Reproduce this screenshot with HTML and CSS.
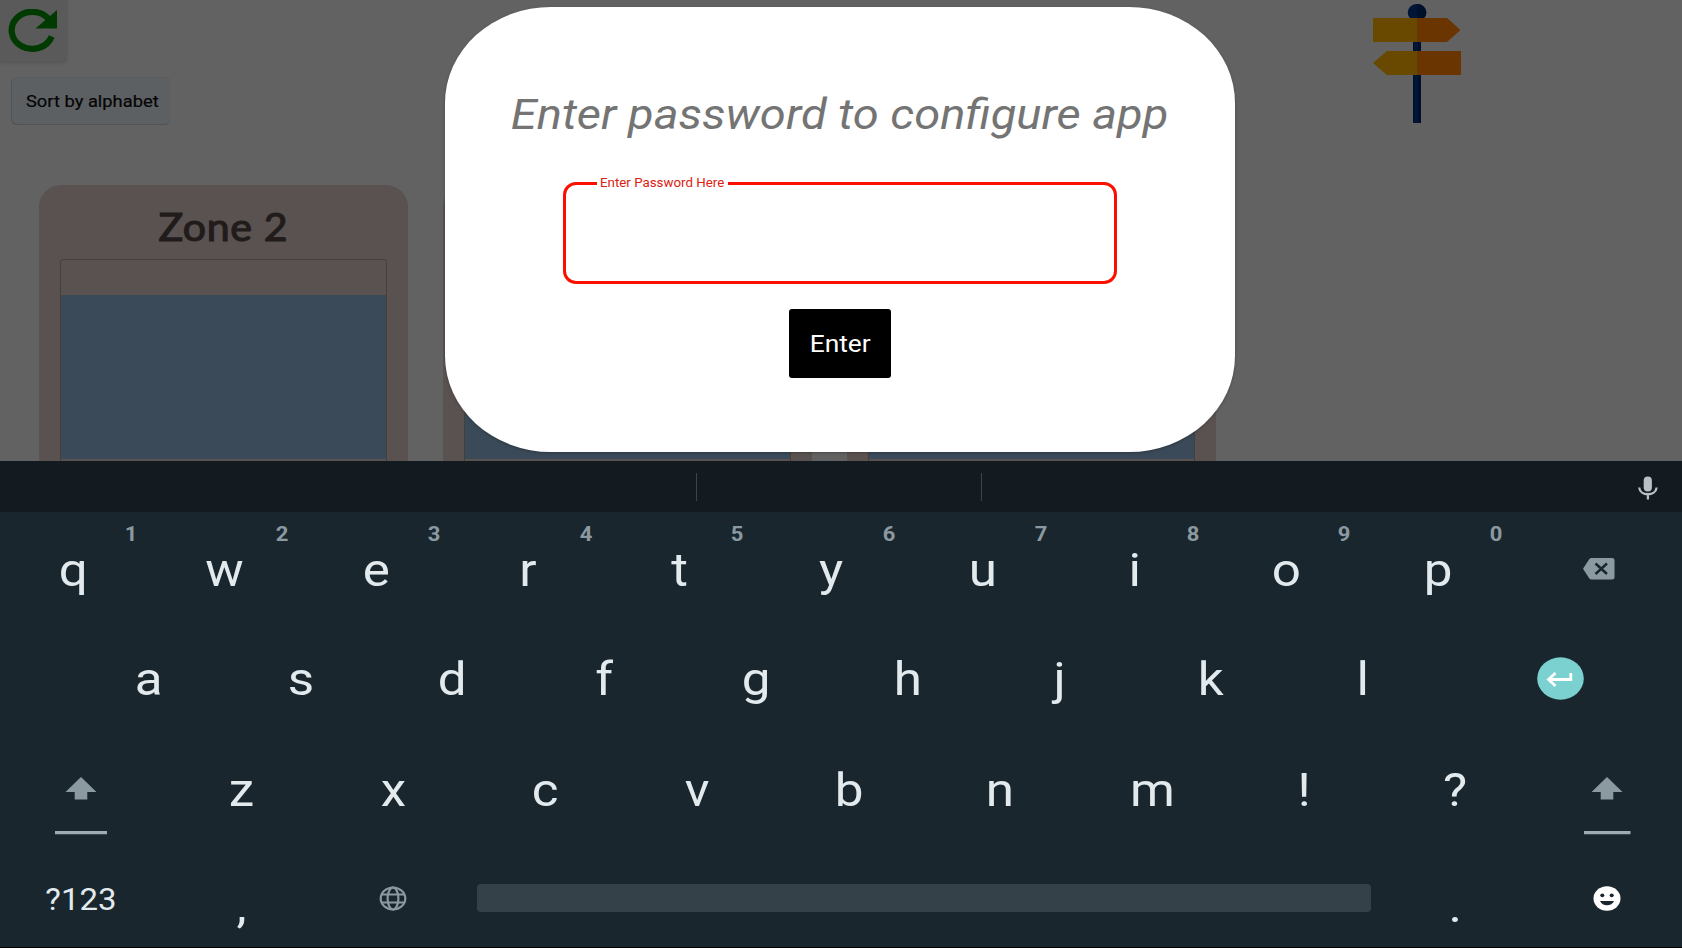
FILE: index.html
```html
<!DOCTYPE html>
<html lang="en">
<head>
<meta charset="utf-8">
<title>Configure app</title>
<link rel="stylesheet" href="styles.css">
</head>
<body>
<div class="screen">
  <main class="app">
    <div class="toolbar">
      <div class="tools">
        <div class="refresh">
          <svg width="50" height="44" viewBox="0 0 50 44"><path d="M43.700 27.500A20.600 18.500 0 1 1 41 10.500" fill="none" stroke="#003a00" stroke-width="6.200"/><path d="M49 1v18.500H27.500z" fill="#003a00"/></svg>
        </div>
        <div class="sort"><span class="sort-text">Sort by alphabet</span></div>
      </div>
      <svg class="signpost" width="90" height="120" viewBox="0 0 90 120">
        <ellipse cx="45" cy="8.500" rx="9.300" ry="8.500" fill="#001638"/><path d="M45 0a9.300 8.500 0 0 1 0 17z" fill="#00102b"/>
        <path d="M41 14h8v105h-8z" fill="#00102b"/><path d="M42.500 14h3.500v105h-3.500z" fill="#001638"/>
        <path d="M1 14h44v24H1z" fill="#694800"/><path d="M45 14h30l13.500 12L75 38H45z" fill="#6a3500"/>
        <path d="M45 47v24H15L1 59l14-12z" fill="#694800"/><path d="M45 47h44v24H45z" fill="#6a3500"/>
      </svg>
    </div>
    <div class="zones">
      <section class="zone"><h2 class="zone-title"><span class="zone-title-text">Zone 2</span></h2><div class="tank"><div class="water"></div></div></section>
      <section class="zone"><h2 class="zone-title"></h2><div class="tank"><div class="water"></div></div></section>
      <section class="zone"><h2 class="zone-title"></h2><div class="tank"><div class="water"></div></div></section>
    </div>
  </main>

  <div class="dialog">
    <h1 class="dialog-title"><span class="dialog-title-text">Enter password to configure app</span></h1>
    <fieldset class="field"><legend class="legend"><span class="legend-text">Enter Password Here</span></legend></fieldset>
    <div class="submit"><span class="submit-text">Enter</span></div>
  </div>

  <div class="keyboard">
    <div class="suggest">
      <div class="suggest-mid"></div>
      <svg class="mic" width="20" height="24" viewBox="0 0 20 24"><rect x="5.700" y=".5" width="8.200" height="15" rx="4.100" fill="#b9c1c5"/><path d="M1.200 11.500c.8 9 16.600 9 17.400 0M9.900 18v5.500" fill="none" stroke="#b9c1c5" stroke-width="2.300"/></svg>
    </div>
    <div class="row row-1">
      <div class="key"><span class="hint">1</span><span class="ch">q</span></div>
      <div class="key"><span class="hint">2</span><span class="ch">w</span></div>
      <div class="key"><span class="hint">3</span><span class="ch">e</span></div>
      <div class="key"><span class="hint">4</span><span class="ch">r</span></div>
      <div class="key"><span class="hint">5</span><span class="ch">t</span></div>
      <div class="key"><span class="hint">6</span><span class="ch">y</span></div>
      <div class="key"><span class="hint">7</span><span class="ch">u</span></div>
      <div class="key"><span class="hint">8</span><span class="ch">i</span></div>
      <div class="key"><span class="hint">9</span><span class="ch">o</span></div>
      <div class="key"><span class="hint">0</span><span class="ch">p</span></div>
      <div class="side backspace"><svg width="32" height="22" viewBox="0 0 32 22"><path d="M8.500 0H29q2.500 0 2.500 2.200v17.200q0 2.100-2.500 2.100H8.500q-1.500 0-2.300-1.300L0 10.800 6.200 1.300Q7 0 8.500 0z" fill="#8b99a0"/><path d="M12.500 5.500l11.500 10.500M24 5.500L12.500 16" stroke="#1a262e" stroke-width="2.500"/></svg></div>
    </div>
    <div class="row row-2">
      <div class="key"><span class="ch">a</span></div><div class="key"><span class="ch">s</span></div><div class="key"><span class="ch">d</span></div>
      <div class="key"><span class="ch">f</span></div><div class="key"><span class="ch">g</span></div><div class="key"><span class="ch">h</span></div>
      <div class="key"><span class="ch">j</span></div><div class="key"><span class="ch">k</span></div><div class="key"><span class="ch">l</span></div>
      <div class="side return"><svg width="47" height="43" viewBox="0 0 47 43"><ellipse cx="23.500" cy="21.500" rx="23.300" ry="21.200" fill="#7bd0d0"/><path d="M33.800 16v6.500H11.500M18.500 16l-7 6.500 7 6.500" fill="none" stroke="#fff" stroke-width="2.800"/></svg></div>
    </div>
    <div class="row row-3">
      <div class="side first shift"><svg width="52" height="58" viewBox="0 0 52 58"><path d="M26 0l15.500 15h-9.200v7.500H19.700V15h-9.200z" fill="#8b99a0"/><path d="M0 54h52v3.200H0z" fill="#9eabb1"/></svg></div>
      <div class="key"><span class="ch">z</span></div><div class="key"><span class="ch">x</span></div><div class="key"><span class="ch">c</span></div>
      <div class="key"><span class="ch">v</span></div><div class="key"><span class="ch">b</span></div><div class="key"><span class="ch">n</span></div>
      <div class="key"><span class="ch">m</span></div><div class="key"><span class="ch">!</span></div><div class="key"><span class="ch">?</span></div>
      <div class="side shift"><svg width="48" height="58" viewBox="0 0 48 58"><path d="M24 0l15.500 15h-9.200v7.500H17.700V15H8.500z" fill="#8b99a0"/><path d="M1 54h46.500v3.200H1z" fill="#9eabb1"/></svg></div>
    </div>
    <div class="row row-4">
      <div class="side first"><span class="mode">?123</span></div>
      <div class="key low"><span class="ch">,</span></div>
      <div class="key globe"><svg width="28" height="25" viewBox="0 0 28 25" fill="none" stroke="#8b99a0" stroke-width="2.200"><ellipse cx="14" cy="12.500" rx="12.300" ry="11"/><ellipse cx="14" cy="12.500" rx="5.400" ry="11"/><path d="M2.700 8.500h22.600M2.700 16.500h22.600"/></svg></div>
      <div class="space-cell"><div class="space"></div></div>
      <div class="key low"><span class="ch">.</span></div>
      <div class="side"><svg class="smiley" width="28" height="25" viewBox="0 0 28 25"><ellipse cx="14" cy="12.500" rx="13.500" ry="12.200" fill="#fff"/><ellipse cx="9.300" cy="9.300" rx="2" ry="1.900" fill="#1a262e"/><ellipse cx="18.700" cy="9.300" rx="2" ry="1.900" fill="#1a262e"/><path d="M7 15h14c-2 5.600-12 5.600-14 0z" fill="#1a262e"/></svg></div>
    </div>
  </div>
</div>
</body>
</html>
```
FILE: styles.css
```css
* { box-sizing: border-box; }
body { margin: 0; background: #000; font-family: Roboto, "Liberation Sans", sans-serif; }
.screen { position: relative; width: 1682px; height: 948px; overflow: hidden; }

.app { height: 461px; overflow: hidden; background: #626262; }
.toolbar { display: flex; justify-content: space-between; height: 185px; padding-right: 220px; }
.refresh { width: 67px; height: 62px; padding: 9px 0 0 8px; background: #5a5a5a; border-radius: 0 0 5px 0; box-shadow: 0 1px 3px rgba(0,0,0,.15); }
.refresh svg { display: block; }
.sort { width: 160px; height: 48px; margin: 15px 0 0 11px; padding-left: 14px; line-height: 47px; background: #5d6063; border: 1px solid #505254; border-top-color: #5a5b5d; border-right-color: #5f6163; border-radius: 6px; }
.sort-text { display: inline-block; font-size: 16.5px; font-weight: 400; -webkit-text-stroke: .2px #050505; color: #050505; white-space: nowrap; transform: scaleX(1.11); transform-origin: 0 50%; }
.signpost { margin-top: 4px; }
.zones { display: flex; gap: 35.500px; padding-left: 39px; }
.zone { flex: none; width: 368.500px; height: 276px; padding: 0 21px; background: #595250; border-radius: 22px 22px 0 0; }
.zone-title { height: 74px; margin: 0; text-align: center; font: 400 39.500px/81px Lato, sans-serif; color: #211c1b; }
.zone-title-text { display: inline-block; letter-spacing: .6px; -webkit-text-stroke: 1.200px #211c1b; transform: scaleX(1.04); }
.tank { height: 210px; padding-top: 35px; border: 1.500px solid #46403c; border-radius: 3px 3px 0 0; }
.water { height: 164px; background: #3a4a58; }

.dialog { position: absolute; left: 445px; top: 7px; width: 790px; height: 445px; padding-top: 74px; background: #fff; border-radius: 106px / 96px; box-shadow: 0 1px 3px rgba(0,0,0,.25); display: flex; flex-direction: column; align-items: center; }
.dialog-title { margin: 0; height: 95px; font-size: 42px; font-weight: 400; font-style: italic; line-height: 68px; color: #747474; white-space: nowrap; }
.dialog-title-text { display: inline-block; transform: scaleX(1.12); }
.field { width: 554px; height: 108px; margin: 0; padding: 0 0 0 31px; border: 3.500px solid #fb1000; border-radius: 13px; }
.legend { width: 131px; height: 14px; margin: 0; padding: 0 0 0 3px; text-align: left; font-size: 12px; line-height: 14px; color: #dc2010; white-space: nowrap; }
.legend-text { display: inline-block; transform: scaleX(1.11); transform-origin: 0 50%; }
.submit { width: 102.500px; height: 69px; margin-top: 24.500px; background: #000; border-radius: 3px; color: #fff; text-align: center; font-size: 23.500px; line-height: 71px; }
.submit-text { display: inline-block; transform: scaleX(1.12); }

.keyboard { height: 486px; background: #1a262e; overflow: hidden; }
.suggest { display: flex; justify-content: space-between; height: 51px; padding: 12px 24.500px 0 696px; background: #131b21; }
.suggest-mid { width: 286px; height: 28px; border: solid #3c454a; border-width: 0 1px; }
.mic { margin-top: 3px; }
.row { display: flex; width: 1682px; }
.row-1 { height: 112.400px; padding-top: 3.400px; margin-left: -2.800px; }
.row-2 { height: 110.400px; padding-left: 73.200px; }
.row-3 { height: 110.200px; }
.row-4 { height: 102px; }
.key { position: relative; flex: none; width: 151.700px; height: 110px; text-align: center; }
.ch { display: inline-block; font-size: 46.500px; line-height: 110px; color: #e2eaed; transform: scaleX(1.1); }
.hint { position: absolute; left: 123.500px; top: 6px; width: 20px; font-size: 20px; font-weight: 700; line-height: 26px; color: #8b99a1; transform: scaleX(1.1); }
.side { flex: 1; height: 110px; display: flex; align-items: center; justify-content: center; }
.first { flex: none; width: 166px; padding-right: 4px; }
.shift { align-items: flex-start; padding-top: 42.500px; }
.backspace { padding: 0 0 2px 4px; }
.return { padding-bottom: 2px; }
.mode { font-size: 30.500px; line-height: 110px; color: #e2eaed; transform: scaleX(1.08); }
.low { padding-top: 6px; height: 116px; }
.globe { display: flex; align-items: center; justify-content: center; height: 107px; padding-right: 2px; }
.smiley { margin-bottom: 3px; }
.space-cell { flex: none; width: 910.300px; padding: 39.500px 9px 0 7.500px; }
.space { height: 28px; border-radius: 4px; background: #354148; }
```
